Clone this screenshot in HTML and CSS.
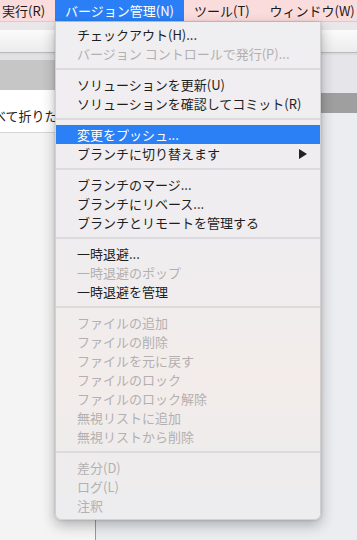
FILE: index.html
```html
<!DOCTYPE html>
<html lang="ja">
<head>
<meta charset="utf-8">
<link rel="stylesheet" href="styles.css">
</head>
<body>
<div class="menubar">
  <span class="mb-item mb-first">実行(R)</span>
  <span class="mb-item mb-active">バージョン管理(N)</span>
  <span class="mb-item">ツール(T)</span>
  <span class="mb-item">ウィンドウ(W)</span>
</div>
<div class="toolbar">
  <div class="tb-top"></div>
  <div class="tb-band"></div>
  <div class="tb-bottom"></div>
</div>
<div class="main">
  <div class="sidebar">
    <div class="sb-head"></div>
    <div class="sb-row"><span class="sb-text">すべて折りたたむ</span></div>
    <div class="sb-rest"></div>
  </div>
  <div class="content">
    <div class="ct-top"></div>
    <div class="ct-band"></div>
    <div class="ct-rest"></div>
  </div>
</div>

<div class="menu">
  <div class="item">チェックアウト(H)...</div>
  <div class="item disabled">バージョン コントロールで発行(P)...</div>
  <div class="sep"></div>
  <div class="item">ソリューションを更新(U)</div>
  <div class="item">ソリューションを確認してコミット(R)</div>
  <div class="sep"></div>
  <div class="item selected">変更をプッシュ...</div>
  <div class="item"><span>ブランチに切り替えます</span><svg class="arrow" width="8" height="10" viewBox="0 0 8 10"><polygon points="0,0 8,5 0,10" fill="#222"/></svg></div>
  <div class="sep"></div>
  <div class="item">ブランチのマージ...</div>
  <div class="item">ブランチにリベース...</div>
  <div class="item">ブランチとリモートを管理する</div>
  <div class="sep"></div>
  <div class="item">一時退避...</div>
  <div class="item disabled">一時退避のポップ</div>
  <div class="item">一時退避を管理</div>
  <div class="sep"></div>
  <div class="item disabled">ファイルの追加</div>
  <div class="item disabled">ファイルの削除</div>
  <div class="item disabled">ファイルを元に戻す</div>
  <div class="item disabled">ファイルのロック</div>
  <div class="item disabled">ファイルのロック解除</div>
  <div class="item disabled">無視リストに追加</div>
  <div class="item disabled">無視リストから削除</div>
  <div class="sep"></div>
  <div class="item disabled">差分(D)</div>
  <div class="item disabled">ログ(L)</div>
  <div class="item disabled">注釈</div>
</div>
</body>
</html>
```

FILE: styles.css
```css
* { box-sizing: border-box; }
html, body {
  margin: 0;
  padding: 0;
}
body {
  width: 357px;
  height: 540px;
  overflow: hidden;
  position: relative;
  background: #f4f4f4;
  font-family: "Noto Sans CJK JP", "Liberation Sans", sans-serif;
  font-size: 13px;
  color: #1e1e1e;
  display: flex;
  flex-direction: column;
}

.menubar {
  height: 22px;
  flex: 0 0 22px;
  background: #fbdcdc;
  border-bottom: 1px solid #dccbcc;
  display: flex;
  align-items: stretch;
  white-space: nowrap;
  overflow: hidden;
}
.mb-item {
  padding: 0 10px;
  line-height: 21px;
  color: #1a1a1a;
}
.mb-first { padding-left: 2px; }
.mb-active {
  background: #2b7ff6;
  color: #ffffff;
}

.toolbar {
  flex: 0 0 33px;
  display: flex;
  flex-direction: column;
}
.tb-top { height: 8px; background: #e9e7ea; }
.tb-band {
  height: 22px;
  background: linear-gradient(to bottom, #fbfbfb, #ececec);
}
.tb-bottom {
  height: 3px;
  border-top: 1px solid #b9b9bb;
  background: #dcdcdf;
}

.main {
  flex: 1;
  display: flex;
}
.sidebar {
  width: 96px;
  display: flex;
  flex-direction: column;
  border-right: 1px solid #9a9a9a;
}
.sb-head {
  height: 35px;
  border-top: 5px solid #e2e2e4;
  background: #c6c6c7;
}
.sb-row {
  height: 43px;
  background: #ffffff;
  border-bottom: 1px solid #d6d6d6;
  display: flex;
  align-items: center;
  padding-top: 8px;
  overflow: hidden;
  white-space: nowrap;
}
.sb-text {
  margin-left: -19px;
  color: #222;
}
.sb-rest {
  flex: 1;
  background: #f4f4f4;
}

.content {
  flex: 1;
  display: flex;
  flex-direction: column;
}
.ct-top { height: 38px; background: #e6e6ea; }
.ct-band { height: 20px; background: #9f9f9f; }
.ct-rest { flex: 1; background: #ebedf1; }

.menu {
  position: absolute;
  left: 55px;
  top: 22px;
  width: 266px;
  height: 498px;
  padding: 3px 0 5px;
  background: linear-gradient(to bottom, #efeef1 0%, #efedef 45%, #f3ecea 72%, #efecec 85%, #edecef 100%);
  border: 1px solid rgba(0,0,0,0.12);
  border-top: none;
  border-radius: 0 0 6px 6px;
  box-shadow: 0 5px 14px rgba(0,0,0,0.28), 0 0 3px rgba(0,0,0,0.18);
  display: flex;
  flex-direction: column;
}
.item {
  height: 19px;
  line-height: 19px;
  padding: 0 13px 0 21px;
  white-space: nowrap;
  color: #1e1e1e;
  display: flex;
  align-items: center;
  justify-content: space-between;
}
.item.disabled { color: #b4b0b0; }
.item.selected {
  background: #2b80f6;
  color: #ffffff;
}
.arrow { flex: 0 0 auto; }
.sep {
  height: 12px;
  flex: 0 0 12px;
  display: flex;
  align-items: center;
}
.sep::before {
  content: "";
  display: block;
  width: 100%;
  height: 2px;
  background: #dcdadc;
}
```
